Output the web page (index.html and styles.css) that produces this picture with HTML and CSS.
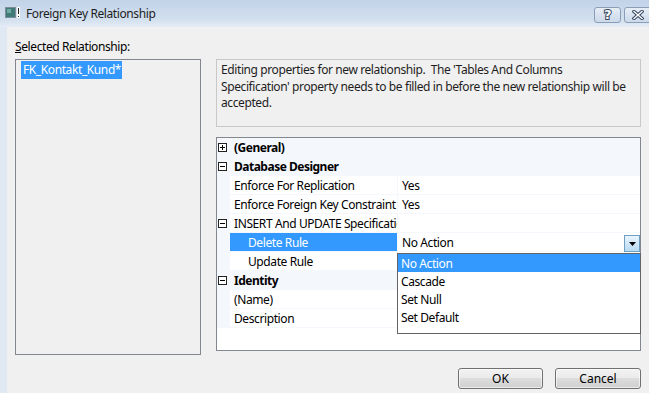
FILE: index.html
```html
<!DOCTYPE html>
<html lang="en">
<head>
	<meta charset="UTF-8">
	<title>Foreign Key Relationship</title>
	<link rel="stylesheet" href="styles.css">
</head>
<body>
	<div class="window">
		<!-- title bar -->
		<div class="titlebar">
			<svg class="app-icon" width="16" height="12" viewBox="0 0 16 12">
				<rect x="0.5" y="0.5" width="10" height="10" fill="#3f7b78" stroke="#7e8c9a"/>
				<rect x="2" y="2" width="4" height="4" fill="#6ea9a2"/>
				<rect x="12" y="0" width="3" height="11" fill="#fff"/>
				<rect x="13" y="1" width="1" height="6" fill="#222"/>
				<rect x="13" y="9" width="1" height="1" fill="#222"/>
			</svg>
			<span class="title">Foreign Key Relationship</span>
			<div class="caption">
				<span class="cap-btn help">?</span>
				<span class="cap-btn close">
					<svg width="12" height="10" viewBox="0 0 12 10">
						<path d="M2 1.5 L10 8.5 M10 1.5 L2 8.5" stroke="#34465e" stroke-width="3.4" stroke-linecap="square"/>
						<path d="M2 1.5 L10 8.5 M10 1.5 L2 8.5" stroke="#fff" stroke-width="1.4" stroke-linecap="square"/>
					</svg>
				</span>
			</div>
		</div>

		<div class="client">
			<div class="label"><u>S</u>elected Relationship:</div>
			<div class="main">
				<div class="listbox">
					<span class="item">FK_Kontakt_Kund*</span>
				</div>
				<div class="right">
					<div class="desc">Editing properties for new relationship.&nbsp; The 'Tables And Columns<br>Specification' property needs to be filled in before the new relationship will be<br>accepted.</div>

					<!-- property grid -->
					<div class="grid">
						<div class="row cat">
							<div class="gutter"><svg width="9" height="9" viewBox="0 0 9 9"><rect x="0.5" y="0.5" width="8" height="8" fill="#fff" stroke="#222"/><path d="M2 4.5 H7 M4.5 2 V7" stroke="#000"/></svg></div>
							<div class="name">(General)</div>
						</div>
						<div class="row cat">
							<div class="gutter"><svg width="9" height="9" viewBox="0 0 9 9"><rect x="0.5" y="0.5" width="8" height="8" fill="#fff" stroke="#222"/><path d="M2 4.5 H7" stroke="#000"/></svg></div>
							<div class="name">Database Designer</div>
						</div>
						<div class="row">
							<div class="gutter"></div>
							<div class="name">Enforce For Replication</div>
							<div class="value">Yes</div>
						</div>
						<div class="row">
							<div class="gutter"></div>
							<div class="name">Enforce Foreign Key Constraint</div>
							<div class="value">Yes</div>
						</div>
						<div class="row">
							<div class="gutter"><svg width="9" height="9" viewBox="0 0 9 9"><rect x="0.5" y="0.5" width="8" height="8" fill="#fff" stroke="#222"/><path d="M2 4.5 H7" stroke="#000"/></svg></div>
							<div class="name">INSERT And UPDATE Specification</div>
							<div class="value"></div>
						</div>
						<div class="row sub selected">
							<div class="gutter"></div>
							<div class="name">Delete Rule</div>
							<div class="value">No Action
								<span class="dd-btn"><svg width="7" height="4" viewBox="0 0 7 4"><path d="M0 0 H7 L3.5 4 Z" fill="#000"/></svg></span>
							</div>
						</div>
						<div class="row sub">
							<div class="gutter"></div>
							<div class="name">Update Rule</div>
							<div class="value"></div>
						</div>
						<div class="row cat">
							<div class="gutter"><svg width="9" height="9" viewBox="0 0 9 9"><rect x="0.5" y="0.5" width="8" height="8" fill="#fff" stroke="#222"/><path d="M2 4.5 H7" stroke="#000"/></svg></div>
							<div class="name">Identity</div>
						</div>
						<div class="row">
							<div class="gutter"></div>
							<div class="name">(Name)</div>
							<div class="value"></div>
						</div>
						<div class="row">
							<div class="gutter"></div>
							<div class="name">Description</div>
							<div class="value"></div>
						</div>

						<!-- open dropdown -->
						<div class="dropdown">
							<div class="opt hl">No Action</div>
							<div class="opt">Cascade</div>
							<div class="opt">Set Null</div>
							<div class="opt">Set Default</div>
						</div>
					</div>
				</div>
			</div>
			<div class="buttons">
				<button class="btn ok">OK</button>
				<button class="btn cancel">Cancel</button>
			</div>
		</div>
	</div>
</body>
</html>
```

FILE: styles.css
```css
* {
	margin: 0;
	padding: 0;
	box-sizing: border-box;
}
body {
	width: 649px;
	height: 393px;
	overflow: hidden;
	background-color: #f0f0f0;
	font-family: "Noto Sans", sans-serif;
	font-size: 12px;
	letter-spacing: -0.4px;
	color: #000;
}
.titlebar {
	display: flex;
	align-items: center;
	height: 27px;
	background: linear-gradient(#c2d3e8, #d2dfee 70%, #e4ecf6);
}
.app-icon {
	margin-left: 5px;
	margin-top: -1px;
}
.title {
	margin-left: 5px;
	line-height: 16px;
	color: #1e1e1e;
}
.caption {
	display: flex;
	gap: 3px;
	margin-left: auto;
	margin-right: -20px;
	align-self: flex-start;
	margin-top: 7px;
}
.cap-btn {
	display: flex;
	align-items: center;
	justify-content: center;
	width: 27px;
	height: 16px;
	border: 1px solid #8a9eb8;
	border-radius: 3px;
	background: linear-gradient(#e6edf6, #cbd9ea);
}
.cap-btn.close {
	width: 45px;
	justify-content: flex-start;
	padding-left: 7px;
}
.help {
	font: bold 13px "DejaVu Sans", sans-serif;
	color: #fff;
	-webkit-text-stroke: 2px #34465e;
	paint-order: stroke fill;
	line-height: 14px;
}
.client {
	height: 366px;
	border-left: 7px solid #dfe8f3;
	padding: 12px 8px 0 8px;
}
.label {
	height: 16px;
	line-height: 16px;
	margin-bottom: 4px;
}
.main {
	display: flex;
	gap: 15px;
	height: 296px;
}
.listbox {
	width: 186px;
	flex: none;
	border: 1px solid #828790;
	padding: 1px 0 0 5px;
}
.item {
	display: inline-block;
	padding: 0 1px 0 2px;
	line-height: 18px;
	background-color: #3399ff;
	color: #fff;
}
.right {
	flex: 1;
	display: flex;
	flex-direction: column;
}
.desc {
	height: 68px;
	border: 1px solid #c8c8c8;
	padding: 2px 4px;
	line-height: 16.5px;
	white-space: nowrap;
	color: #1e1e1e;
}
.grid {
	position: relative;
	height: 214px;
	margin-top: 10px;
	border: 1px solid #828790;
	background-color: #fff;
}
.row {
	display: flex;
	height: 19px;
	line-height: 16px;
	border-bottom: 1px solid #f4f7fc;
}
.gutter {
	display: flex;
	align-items: center;
	width: 13px;
	flex: none;
	padding-left: 1px;
	background-color: #f4f7fc;
}
.name {
	width: 167px;
	flex: none;
	padding: 2px 0 0 4px;
	white-space: nowrap;
	overflow: hidden;
}
.value {
	position: relative;
	flex: 1;
	padding: 2px 0 0 4px;
	border-left: 1px solid #f4f7fc;
}
.row.cat {
	background-color: #f4f7fc;
	font-weight: bold;
	letter-spacing: -0.5px;
}
.row.cat .name {
	flex: 1;
}
.row.sub .name {
	padding-left: 18px;
}
.row.selected .name {
	background-color: #3399ff;
	color: #fff;
}
.dd-btn {
	position: absolute;
	right: 0;
	top: 2px;
	display: flex;
	align-items: center;
	justify-content: center;
	width: 16px;
	height: 17px;
	border: 1px solid #6f9ec4;
	background: linear-gradient(#eaf5fd, #b8daf3);
}
.dropdown {
	position: absolute;
	left: 180px;
	top: 115px;
	width: 244px;
	height: 81px;
	border: 1px solid #646464;
	background-color: #fff;
}
.opt {
	height: 18px;
	line-height: 20px;
	padding-left: 3px;
}
.opt.hl {
	background-color: #3399ff;
	color: #fff;
}
.buttons {
	display: flex;
	justify-content: flex-end;
	gap: 12px;
	margin-top: 13px;
}
.btn {
	width: 85px;
	height: 21px;
	border: 1px solid #707070;
	border-radius: 3px;
	background: linear-gradient(#f2f2f2, #ebebeb 45%, #dddddd 50%, #cfcfcf);
	box-shadow: inset 0 0 0 1px rgba(255, 255, 255, 0.6);
	font: inherit;
	color: #000;
}
.btn.cancel {
	width: 86px;
}
```
